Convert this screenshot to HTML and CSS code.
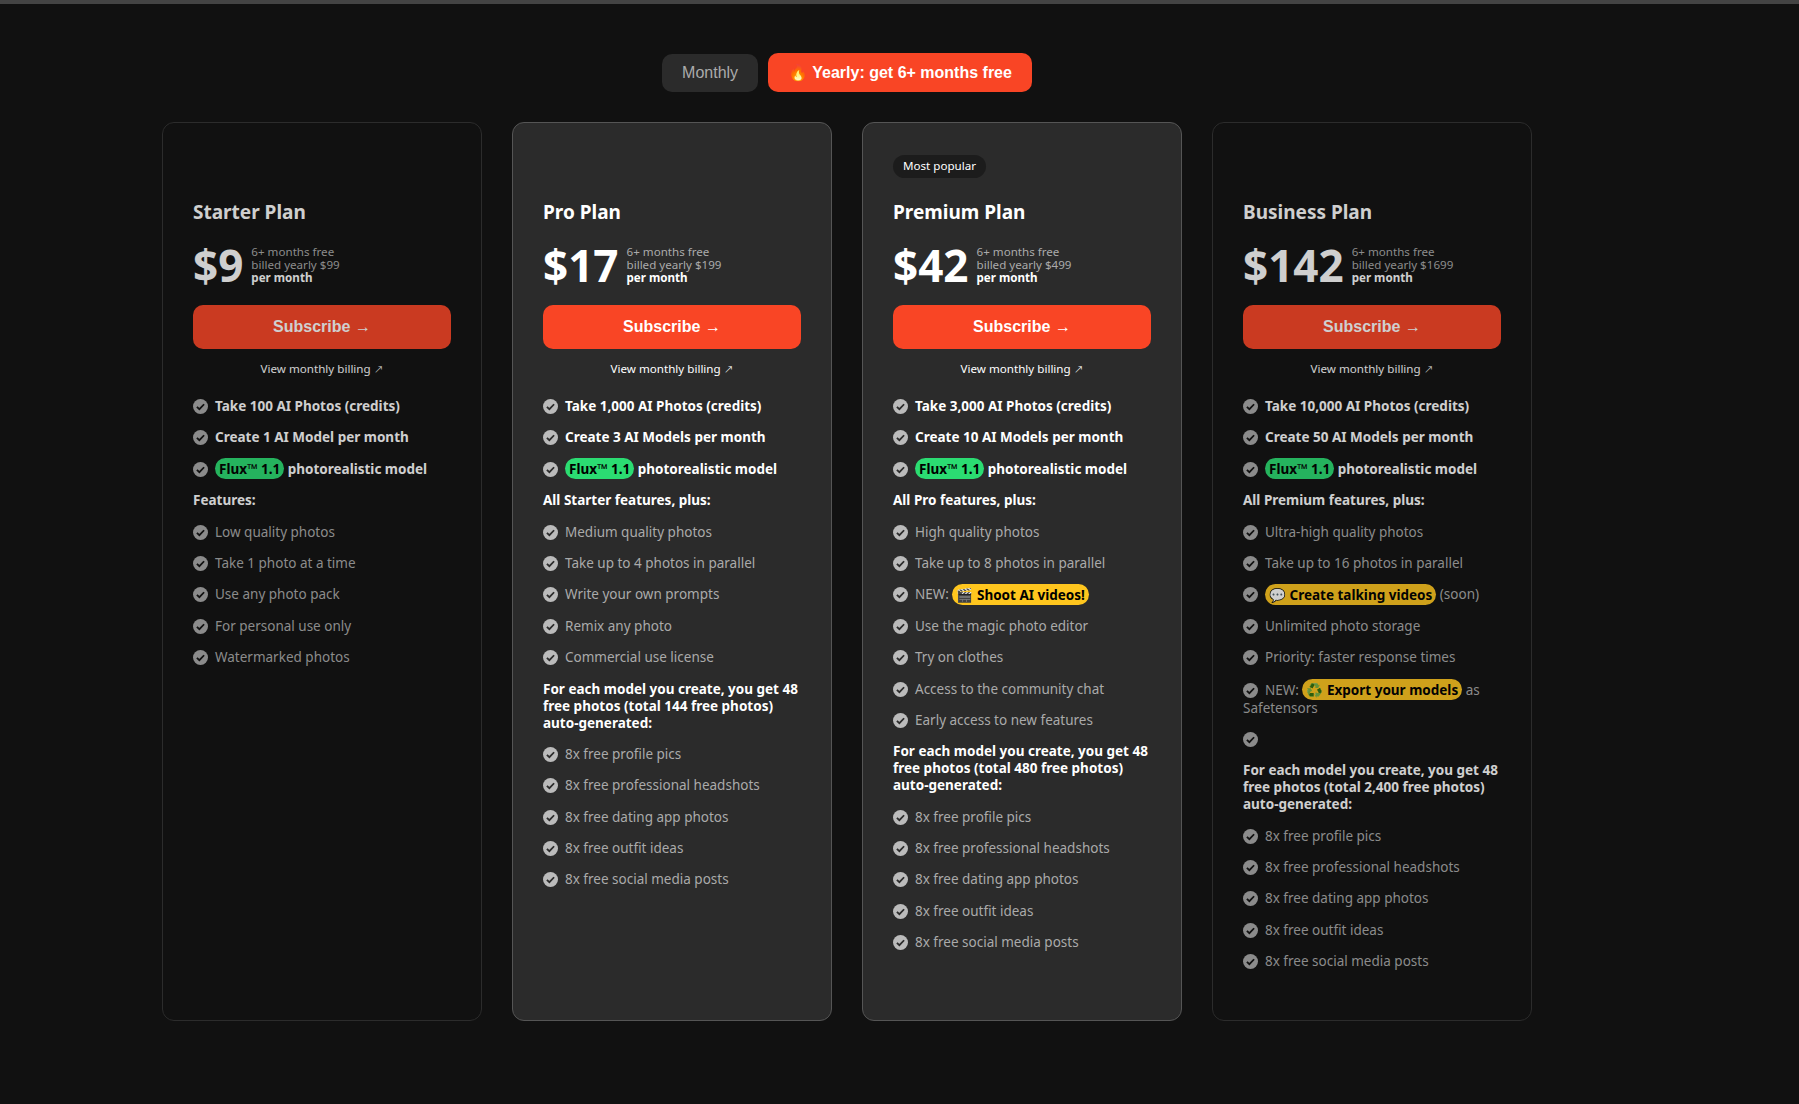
FILE: index.html
```html
<!DOCTYPE html>
<html lang="en">
<head>
  <meta charset="UTF-8" />
  <meta name="viewport" content="width=device-width, initial-scale=1.0"/>
  <title>Pricing</title>
  <link rel="stylesheet" href="styles.css">
</head>
<body>

  <svg class="icon-defs" width="0" height="0">
    <symbol id="check" viewBox="0 0 20 20">
      <circle cx="10" cy="10" r="10" fill="currentColor"/>
      <path d="M5.2 10.4l3.3 3.2 6.3-6.6" fill="none" stroke="var(--tick)" stroke-width="2.4"/>
    </symbol>
  </svg>

  <main class="pricing">

    <div class="toggle">
      <button class="toggle-btn">Monthly</button>
      <button class="toggle-btn active">🔥 Yearly: get 6+ months free</button>
    </div>

    <section class="plans">

      <!-- Starter -->
      <div class="plan dim">
        <div class="badge-slot"></div>
        <h3>Starter Plan</h3>
        <div class="price">
          <span class="amount">$9</span>
          <span class="terms">6+ months free<br>billed yearly $99<br><b>per month</b></span>
        </div>
        <button class="subscribe">Subscribe →</button>
        <a class="billing-link" href="#">View monthly billing <span class="arrow">↗</span></a>
        <ul>
          <li class="strong"><svg class="tick"><use href="#check"/></svg>Take 100 AI Photos (credits)</li>
          <li class="strong"><svg class="tick"><use href="#check"/></svg>Create 1 AI Model per month</li>
          <li class="strong"><svg class="tick"><use href="#check"/></svg><span class="pill green">Flux™ 1.1</span> photorealistic model</li>
          <li class="heading">Features:</li>
          <li><svg class="tick"><use href="#check"/></svg>Low quality photos</li>
          <li><svg class="tick"><use href="#check"/></svg>Take 1 photo at a time</li>
          <li><svg class="tick"><use href="#check"/></svg>Use any photo pack</li>
          <li><svg class="tick"><use href="#check"/></svg>For personal use only</li>
          <li><svg class="tick"><use href="#check"/></svg>Watermarked photos</li>
        </ul>
      </div>

      <!-- Pro -->
      <div class="plan featured">
        <div class="badge-slot"></div>
        <h3>Pro Plan</h3>
        <div class="price">
          <span class="amount">$17</span>
          <span class="terms">6+ months free<br>billed yearly $199<br><b>per month</b></span>
        </div>
        <button class="subscribe">Subscribe →</button>
        <a class="billing-link" href="#">View monthly billing <span class="arrow">↗</span></a>
        <ul>
          <li class="strong"><svg class="tick"><use href="#check"/></svg>Take 1,000 AI Photos (credits)</li>
          <li class="strong"><svg class="tick"><use href="#check"/></svg>Create 3 AI Models per month</li>
          <li class="strong"><svg class="tick"><use href="#check"/></svg><span class="pill green">Flux™ 1.1</span> photorealistic model</li>
          <li class="heading">All Starter features, plus:</li>
          <li><svg class="tick"><use href="#check"/></svg>Medium quality photos</li>
          <li><svg class="tick"><use href="#check"/></svg>Take up to 4 photos in parallel</li>
          <li><svg class="tick"><use href="#check"/></svg>Write your own prompts</li>
          <li><svg class="tick"><use href="#check"/></svg>Remix any photo</li>
          <li><svg class="tick"><use href="#check"/></svg>Commercial use license</li>
          <li class="heading">For each model you create, you get 48 free photos (total 144 free photos) auto-generated:</li>
          <li><svg class="tick"><use href="#check"/></svg>8x free profile pics</li>
          <li><svg class="tick"><use href="#check"/></svg>8x free professional headshots</li>
          <li><svg class="tick"><use href="#check"/></svg>8x free dating app photos</li>
          <li><svg class="tick"><use href="#check"/></svg>8x free outfit ideas</li>
          <li><svg class="tick"><use href="#check"/></svg>8x free social media posts</li>
        </ul>
      </div>

      <!-- Premium -->
      <div class="plan featured">
        <div class="badge-slot"><span class="badge">Most popular</span></div>
        <h3>Premium Plan</h3>
        <div class="price">
          <span class="amount">$42</span>
          <span class="terms">6+ months free<br>billed yearly $499<br><b>per month</b></span>
        </div>
        <button class="subscribe">Subscribe →</button>
        <a class="billing-link" href="#">View monthly billing <span class="arrow">↗</span></a>
        <ul>
          <li class="strong"><svg class="tick"><use href="#check"/></svg>Take 3,000 AI Photos (credits)</li>
          <li class="strong"><svg class="tick"><use href="#check"/></svg>Create 10 AI Models per month</li>
          <li class="strong"><svg class="tick"><use href="#check"/></svg><span class="pill green">Flux™ 1.1</span> photorealistic model</li>
          <li class="heading">All Pro features, plus:</li>
          <li><svg class="tick"><use href="#check"/></svg>High quality photos</li>
          <li><svg class="tick"><use href="#check"/></svg>Take up to 8 photos in parallel</li>
          <li><svg class="tick"><use href="#check"/></svg>NEW: <span class="pill yellow">🎬 Shoot AI videos!</span></li>
          <li><svg class="tick"><use href="#check"/></svg>Use the magic photo editor</li>
          <li><svg class="tick"><use href="#check"/></svg>Try on clothes</li>
          <li><svg class="tick"><use href="#check"/></svg>Access to the community chat</li>
          <li><svg class="tick"><use href="#check"/></svg>Early access to new features</li>
          <li class="heading">For each model you create, you get 48 free photos (total 480 free photos) auto-generated:</li>
          <li><svg class="tick"><use href="#check"/></svg>8x free profile pics</li>
          <li><svg class="tick"><use href="#check"/></svg>8x free professional headshots</li>
          <li><svg class="tick"><use href="#check"/></svg>8x free dating app photos</li>
          <li><svg class="tick"><use href="#check"/></svg>8x free outfit ideas</li>
          <li><svg class="tick"><use href="#check"/></svg>8x free social media posts</li>
        </ul>
      </div>

      <!-- Business -->
      <div class="plan dim">
        <div class="badge-slot"></div>
        <h3>Business Plan</h3>
        <div class="price">
          <span class="amount">$142</span>
          <span class="terms">6+ months free<br>billed yearly $1699<br><b>per month</b></span>
        </div>
        <button class="subscribe">Subscribe →</button>
        <a class="billing-link" href="#">View monthly billing <span class="arrow">↗</span></a>
        <ul>
          <li class="strong"><svg class="tick"><use href="#check"/></svg>Take 10,000 AI Photos (credits)</li>
          <li class="strong"><svg class="tick"><use href="#check"/></svg>Create 50 AI Models per month</li>
          <li class="strong"><svg class="tick"><use href="#check"/></svg><span class="pill green">Flux™ 1.1</span> photorealistic model</li>
          <li class="heading">All Premium features, plus:</li>
          <li><svg class="tick"><use href="#check"/></svg>Ultra-high quality photos</li>
          <li><svg class="tick"><use href="#check"/></svg>Take up to 16 photos in parallel</li>
          <li><svg class="tick"><use href="#check"/></svg><span class="pill yellow">💬 Create talking videos</span> (soon)</li>
          <li><svg class="tick"><use href="#check"/></svg>Unlimited photo storage</li>
          <li><svg class="tick"><use href="#check"/></svg>Priority: faster response times</li>
          <li class="wrapped"><svg class="tick"><use href="#check"/></svg>NEW: <span class="pill yellow">♻️ Export your models</span> as Safetensors</li>
          <li><svg class="tick"><use href="#check"/></svg></li>
          <li class="heading">For each model you create, you get 48 free photos (total 2,400 free photos) auto-generated:</li>
          <li><svg class="tick"><use href="#check"/></svg>8x free profile pics</li>
          <li><svg class="tick"><use href="#check"/></svg>8x free professional headshots</li>
          <li><svg class="tick"><use href="#check"/></svg>8x free dating app photos</li>
          <li><svg class="tick"><use href="#check"/></svg>8x free outfit ideas</li>
          <li><svg class="tick"><use href="#check"/></svg>8x free social media posts</li>
        </ul>
      </div>

    </section>
  </main>

</body>
</html>
```

FILE: styles.css
```css
body {
  font-family: 'Noto Sans', sans-serif;
  margin: 0;
  background: #111111;
  color: white;
  border-top: 4px solid #444;
}

.icon-defs {
  position: absolute;
}

.pricing {
  width: 1370px;
  margin-left: 162px;
  padding-top: 49px;
}

.toggle {
  display: flex;
  justify-content: center;
  align-items: flex-end;
  gap: 10px;
  margin-bottom: 30px;
}

.toggle-btn {
  font-family: 'Liberation Sans', sans-serif;
  font-size: 16px;
  height: 38px;
  padding: 0 20px;
  border: none;
  border-radius: 10px;
  background: #2b2b2b;
  color: #aaa;
}

.toggle-btn.active {
  height: 39px;
  background: #f94525;
  color: white;
  font-weight: bold;
}

.plans {
  display: grid;
  grid-template-columns: repeat(4, 320px);
  gap: 30px;
}

.plan {
  height: 899px;
  box-sizing: border-box;
  padding: 30px;
  border-radius: 12px;
  border: 1px solid #555;
  background: #2b2b2b;
  --tick: #2b2b2b;
}

.plan.dim {
  opacity: 0.8;
  background: #111111;
  border-color: #333;
  --tick: #111111;
}

.badge-slot {
  height: 23px;
  margin-bottom: 24px;
}

.badge {
  display: inline-block;
  height: 23px;
  line-height: 22px;
  padding: 0 10px;
  border-radius: 12px;
  background: #1c1c1c;
  font-size: 11.6px;
}

.plan h3 {
  margin: 0 0 14.5px;
  font-size: 19px;
  line-height: 24px;
}

.price {
  display: flex;
  align-items: center;
  gap: 8px;
  margin-bottom: 14.5px;
}

.amount {
  font-size: 44px;
  line-height: 52px;
  font-weight: bold;
}

.terms {
  font-size: 11.6px;
  line-height: 13px;
  color: #aaa;
}

.terms b {
  color: white;
}

.subscribe {
  display: block;
  width: 100%;
  height: 44px;
  border: none;
  border-radius: 10px;
  background: #f94525;
  color: white;
  font-family: 'Liberation Sans', sans-serif;
  font-size: 16px;
  font-weight: bold;
}

.billing-link {
  display: block;
  margin: 12px 0 21px;
  font-size: 11.6px;
  line-height: 16px;
  text-align: center;
  color: white;
  text-decoration: none;
}

.arrow {
  font-family: 'DejaVu Sans', sans-serif;
  font-weight: 200;
}

.plan ul {
  list-style: none;
  margin: 0;
  padding: 0;
}

.plan li {
  font-size: 13.5px;
  line-height: 17px;
  margin-bottom: 14.4px;
  color: #aaa;
}

.plan li.wrapped {
  line-height: 18px;
}

.plan li.strong,
.plan li.heading {
  color: white;
  font-weight: bold;
}

.tick {
  width: 15px;
  height: 15px;
  margin-right: 7px;
  vertical-align: -3px;
  color: #bbb;
}

.dim .tick {
  color: #aaa;
}

.pill {
  padding: 1.5px 4px;
  border-radius: 11px;
  color: black;
  font-weight: bold;
}

.pill.green {
  background: #2bdc72;
}

.pill.yellow {
  background: #ffc61e;
}
```
